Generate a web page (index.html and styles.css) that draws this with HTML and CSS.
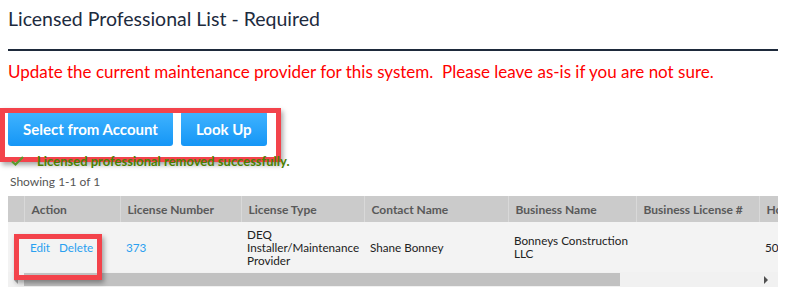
FILE: index.html
```html
<!DOCTYPE html>
<html lang="en">
<head>
    <meta charset="UTF-8">
    <title>Licensed Professional List</title>
    <link rel="stylesheet" href="styles.css">
</head>
<body>
    <div class="page">
        <h2 class="section-title">Licensed Professional List - Required</h2>
        <p class="notice">Update the current maintenance provider for this system.&nbsp; Please leave as-is if you are not sure.</p>

        <div class="button-row">
            <button class="btn">Select from Account</button>
            <button class="btn">Look Up</button>
        </div>

        <div class="success">
            <svg class="check" width="13" height="10" viewBox="0 0 13 10">
                <path d="M1 5.5 L4.5 8.5 L12 1" fill="none" stroke="#5a9a2a" stroke-width="2.2"/>
            </svg>
            <span>Licensed professional removed successfully.</span>
        </div>

        <div class="showing">Showing 1-1 of 1</div>

        <div class="grid-wrap">
            <table class="grid">
                <colgroup>
                    <col style="width:16px">
                    <col style="width:96px">
                    <col style="width:121px">
                    <col style="width:123px">
                    <col style="width:144px">
                    <col style="width:128px">
                    <col style="width:123px">
                    <col style="width:140px">
                </colgroup>
                <thead>
                    <tr>
                        <th class="blank"></th>
                        <th>Action</th>
                        <th>License Number</th>
                        <th>License Type</th>
                        <th>Contact Name</th>
                        <th>Business Name</th>
                        <th>Business License #</th>
                        <th>Home Phone</th>
                    </tr>
                </thead>
                <tbody>
                    <tr>
                        <td class="blank"></td>
                        <td><a href="#">Edit</a>&nbsp;&nbsp; <a href="#">Delete</a></td>
                        <td><a href="#">373</a></td>
                        <td>DEQ<br>Installer/Maintenance<br>Provider</td>
                        <td>Shane Bonney</td>
                        <td>Bonneys Construction<br>LLC</td>
                        <td></td>
                        <td>503</td>
                    </tr>
                </tbody>
            </table>
            <div class="scrollbar">
                <span class="arrow left"></span>
                <span class="thumb"></span>
                <span class="arrow right"></span>
            </div>
        </div>

        <!-- recuadros rojos de anotación -->
        <div class="mark mark-buttons"></div>
        <div class="mark mark-actions"></div>
    </div>
</body>
</html>
```

FILE: styles.css
```css
body {
    margin: 0;
    padding: 0;
    background: #fff;
    font-family: Lato, "Open Sans", sans-serif;
}

.page {
    position: relative;
    width: 770px;
    padding: 0 10px 0 8px;
}

.section-title {
    margin: 8px 0 0 0;
    padding-bottom: 19px;
    border-bottom: 2px solid #1e2a3b;
    font-size: 19.5px;
    line-height: 22px;
    font-weight: normal;
    color: #1d2b3e;
}

.notice {
    margin: 11px 0 0 0;
    font-size: 17px;
    line-height: 20px;
    color: #ff0000;
}

.button-row {
    display: flex;
    gap: 8px;
    margin-top: 29px;
}

.btn {
    height: 35px;
    padding: 0 15px;
    border: none;
    border-radius: 3px;
    background: linear-gradient(#41b4ff, #1596f6);
    color: #fff;
    font-family: Lato, sans-serif;
    font-size: 15px;
    font-weight: bold;
    cursor: pointer;
}

.success {
    position: relative;
    z-index: 2;
    display: flex;
    align-items: center;
    gap: 13px;
    margin-top: 7px;
    padding-left: 3px;
    height: 16px;
    font-size: 13px;
    font-weight: bold;
    color: #4b7f00;
}

.showing {
    margin-top: 5px;
    padding-left: 2px;
    font-size: 12px;
    line-height: 16px;
    color: #555;
}

.grid-wrap {
    margin-top: 6px;
    width: 770px;
    overflow: hidden;
}

.grid {
    table-layout: fixed;
    border-collapse: collapse;
    width: 891px;
    font-size: 12px;
}

.grid th {
    height: 26px;
    padding: 0 7px;
    background: #cbcbcb;
    border-left: 1px solid #d9d9d9;
    text-align: left;
    font-weight: bold;
    color: #595959;
    white-space: nowrap;
}

.grid th.blank {
    border-left: none;
}

.grid td {
    height: 50px;
    padding: 0 6px;
    background: #f3f3f3;
    font-size: 11.7px;
    line-height: 13px;
    color: #222;
    vertical-align: middle;
    white-space: nowrap;
    overflow: hidden;
}

.grid a {
    color: #2a9ff0;
    text-decoration: none;
}

.scrollbar {
    display: flex;
    align-items: center;
    height: 15px;
    background: #f1f1f1;
}

.arrow {
    width: 0;
    height: 0;
    border-top: 4px solid transparent;
    border-bottom: 4px solid transparent;
}

.arrow.left {
    margin: 0 6px 0 6px;
    border-right: 4px solid #a3a3a3;
}

.thumb {
    width: 596px;
    height: 13px;
    background: #c1c1c1;
}

.arrow.right {
    margin-left: auto;
    margin-right: 10px;
    border-left: 4px solid #505050;
}

/* Recuadros de anotación */
.mark {
    position: absolute;
    z-index: 1;
    border: 5px solid #f3434b;
    box-shadow: 2px 3px 5px rgba(0, 0, 0, 0.35);
    box-sizing: border-box;
}

.mark-buttons {
    left: 0;
    top: 100px;
    width: 281px;
    height: 54px;
}

.mark-actions {
    left: 14px;
    top: 226px;
    width: 88px;
    height: 46px;
}
```
